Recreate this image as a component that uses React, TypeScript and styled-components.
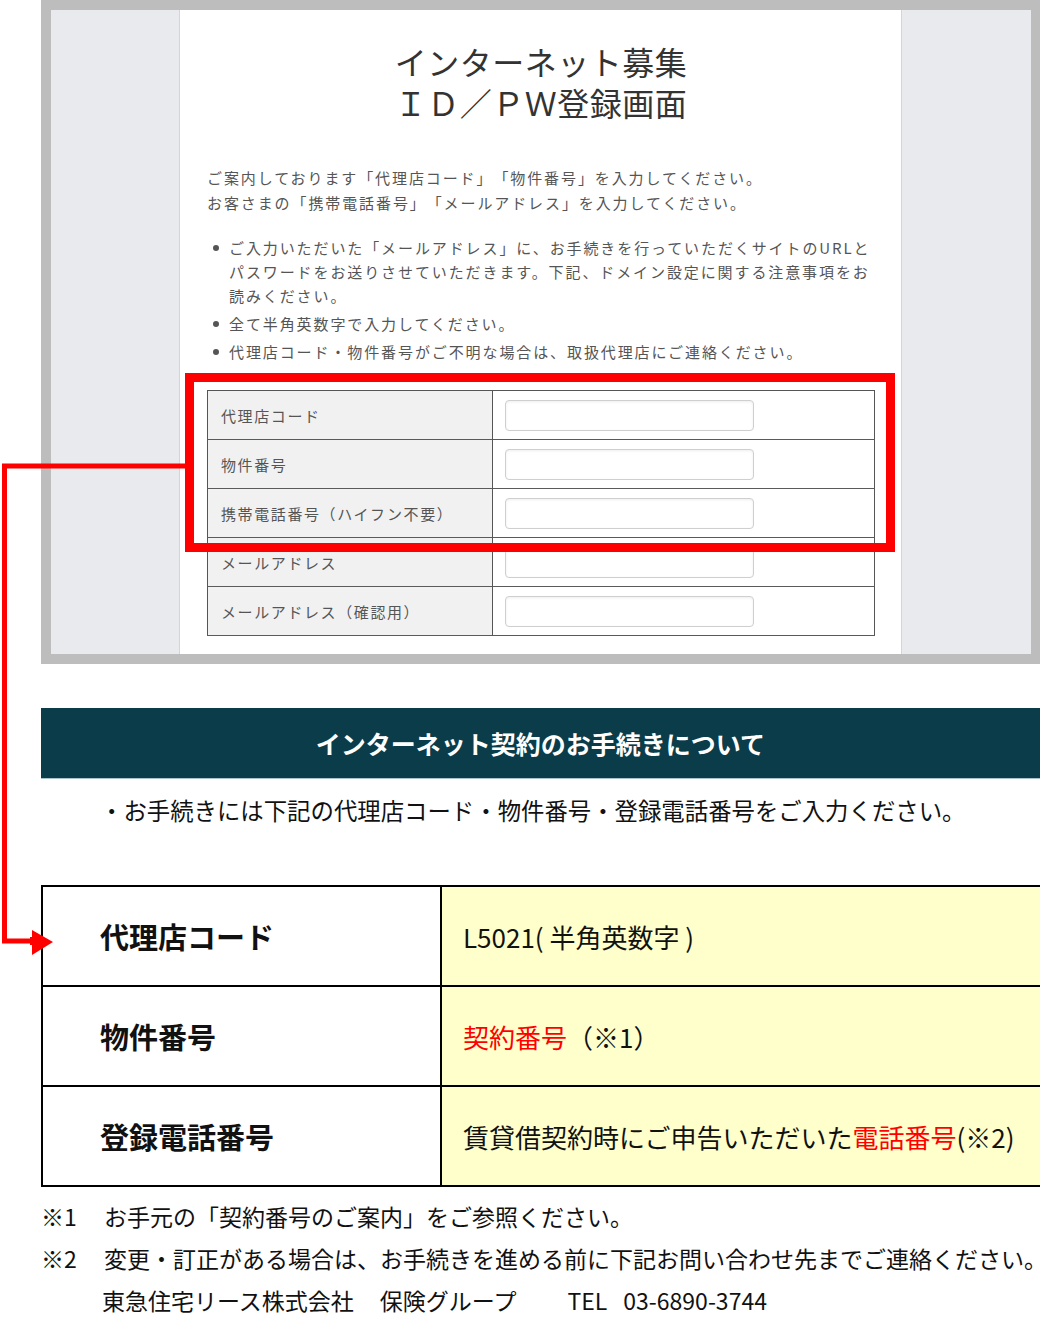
import React from 'react';
import styled, { createGlobalStyle } from 'styled-components';

const GlobalStyle = createGlobalStyle`
  html, body {
    margin: 0;
    padding: 0;
    background: #fff;
  }
  body {
    font-family: "Noto Sans CJK JP", "Noto Sans", sans-serif;
    color: #111;
    overflow-x: hidden;
  }
`;

const FORM_FIELDS: string[] = [
  '代理店コード',
  '物件番号',
  '携帯電話番号（ハイフン不要）',
  'メールアドレス',
  'メールアドレス（確認用）',
];

const NOTES: string[] = [
  'ご入力いただいた「メールアドレス」に、お手続きを行っていただくサイトのURLとパスワードをお送りさせていただきます。下記、ドメイン設定に関する注意事項をお読みください。',
  '全て半角英数字で入力してください。',
  '代理店コード・物件番号がご不明な場合は、取扱代理店にご連絡ください。',
];

const Page = styled.div`
  position: relative;
  width: 1040px;
  min-height: 1318px;
  padding-left: 41px;
  box-sizing: border-box;
  overflow: hidden;
`;

// --- screenshot of the registration screen ---
const ShotFrame = styled.div`
  display: grid;
  grid-template-columns: 128px 723px 129px;
  width: 999px;
  box-sizing: border-box;
  border: 10px solid #bdbdbd;
  border-right-width: 9px;
  background: #e9eaee;
`;

const SidePanel = styled.div`
  background: #e9eaee;
`;

const Sheet = styled.div`
  background: #fff;
  border-left: 1px solid #d4d5d9;
  border-right: 1px solid #d4d5d9;
  padding: 31px 26px 18px 27px;
  color: #555;
  font-size: 15px;
  letter-spacing: 1.9px;
  text-spacing-trim: space-all;
`;

const ShotTitle = styled.h1`
  margin: 0 0 42px;
  text-align: center;
  font-size: 32px;
  line-height: 41px;
  font-weight: 400;
  letter-spacing: 0.5px;
  color: #333;
`;

const Lead = styled.p`
  margin: 0 0 21px;
  line-height: 25px;
`;

const NoteList = styled.ul`
  list-style: none;
  margin: 0 0 26px;
  padding: 0 0 0 6px;
  display: flex;
  flex-direction: column;
  gap: 4px;
`;

const NoteItem = styled.li`
  display: flex;
  gap: 10px;
  line-height: 24px;

  &::before {
    content: '';
    flex: none;
    width: 6px;
    height: 6px;
    margin-top: 9px;
    border-radius: 50%;
    background: #555;
  }
`;

const FormTable = styled.table`
  width: 668px;
  border-collapse: collapse;
  border: 1px solid #555;
`;

const FormRow = styled.tr`
  height: 49px;
  border-bottom: 1px solid #5a5a5a;
`;

const FormLabel = styled.td`
  width: 258px;
  padding: 0 13px;
  background: #f1f1f1;
  border-right: 1px solid #555;
  font-size: 15px;
  letter-spacing: 1.6px;
  color: #555;
`;

const FormCell = styled.td`
  padding: 0 12px;
`;

const TextBox = styled.input`
  display: block;
  width: 249px;
  height: 31px;
  box-sizing: border-box;
  border: 1px solid #cfcfcf;
  border-radius: 4px;
  box-shadow: inset 0 1px 3px rgba(0, 0, 0, 0.07);
  background: #fff;
`;

// --- explanation section ---
const SectionBar = styled.h2`
  margin: 44px 0 0;
  width: 999px;
  height: 70px;
  display: flex;
  align-items: center;
  justify-content: center;
  background: #0b3c4a;
  border-bottom: 1px solid #a9c3cb;
  color: #fff;
  font-size: 25px;
  font-weight: 700;
`;

const Intro = styled.p`
  margin: 0;
  padding: 15px 0 0 59px;
  font-size: 23.4px;
  line-height: 32px;
  white-space: nowrap;
  color: #111;
`;

const InfoTable = styled.table`
  margin-top: 59px;
  width: 1001px;
  border-collapse: collapse;
  border: 2px solid #000;
`;

const InfoRow = styled.tr`
  height: 100px;
  border-bottom: 2px solid #000;
`;

const InfoLabel = styled.th`
  width: 340px;
  padding: 0 0 0 57px;
  text-align: left;
  background: #fff;
  border-right: 2px solid #000;
  font-size: 29px;
  font-weight: 700;
  color: #111;
`;

const InfoValue = styled.td`
  padding: 0 0 0 21px;
  background: #ffffcc;
  font-size: 26px;
  color: #111;
  white-space: nowrap;
`;

const Em = styled.span`
  color: #ff0000;
`;

const Footnotes = styled.div`
  padding-top: 8px;
  display: grid;
  grid-template-columns: 63px 1fr;
  font-size: 23px;
  line-height: 42px;
  color: #111;
  white-space: nowrap;
`;

const Mark = styled.span``;

const Contact = styled.div`
  grid-column: 2;
  display: flex;
  margin-left: -2px;
`;

const ContactPart = styled.span<{ $gap?: number }>`
  margin-left: ${p => p.$gap ?? 0}px;
`;

const Overlay = styled.svg`
  position: absolute;
  left: 0;
  top: 0;
  pointer-events: none;
`;

export default function App() {
  return (
    <Page>
      <GlobalStyle />
      <ShotFrame>
        <SidePanel />
        <Sheet>
          <ShotTitle>
            インターネット募集
            <br />
            ＩＤ／ＰＷ登録画面
          </ShotTitle>
          <Lead>
            ご案内しております「代理店コード」「物件番号」を入力してください。
            <br />
            お客さまの「携帯電話番号」「メールアドレス」を入力してください。
          </Lead>
          <NoteList>
            {NOTES.map(note => (
              <NoteItem key={note}>
                <span>{note}</span>
              </NoteItem>
            ))}
          </NoteList>
          <FormTable>
            <tbody>
              {FORM_FIELDS.map(field => (
                <FormRow key={field}>
                  <FormLabel>{field}</FormLabel>
                  <FormCell>
                    <TextBox type="text" aria-label={field} />
                  </FormCell>
                </FormRow>
              ))}
            </tbody>
          </FormTable>
        </Sheet>
        <SidePanel />
      </ShotFrame>

      <SectionBar>インターネット契約のお手続きについて</SectionBar>
      <Intro>・お手続きには下記の代理店コード・物件番号・登録電話番号をご入力ください。</Intro>

      <InfoTable>
        <tbody>
          <InfoRow>
            <InfoLabel>代理店コード</InfoLabel>
            <InfoValue>L5021( 半角英数字 )</InfoValue>
          </InfoRow>
          <InfoRow>
            <InfoLabel>物件番号</InfoLabel>
            <InfoValue>
              <Em>契約番号</Em>（※1）
            </InfoValue>
          </InfoRow>
          <InfoRow>
            <InfoLabel>登録電話番号</InfoLabel>
            <InfoValue>
              賃貸借契約時にご申告いただいた<Em>電話番号</Em>(※2)
            </InfoValue>
          </InfoRow>
        </tbody>
      </InfoTable>

      <Footnotes>
        <Mark>※1</Mark>
        <span>お手元の「契約番号のご案内」をご参照ください。</span>
        <Mark>※2</Mark>
        <span>変更・訂正がある場合は、お手続きを進める前に下記お問い合わせ先までご連絡ください。</span>
        <Contact>
          <ContactPart>東急住宅リース株式会社</ContactPart>
          <ContactPart $gap={26}>保険グループ</ContactPart>
          <ContactPart $gap={51}>TEL</ContactPart>
          <ContactPart $gap={16}>03-6890-3744</ContactPart>
        </Contact>
      </Footnotes>

      <Overlay width="1040" height="1318" viewBox="0 0 1040 1318">
        <rect x="189.5" y="377.5" width="701" height="170" fill="none" stroke="#ff0000" strokeWidth="9" />
        <polyline
          points="185,466 4.5,466 4.5,941 36,941"
          fill="none"
          stroke="#ff0000"
          strokeWidth="5"
          strokeLinejoin="miter"
        />
        <rect x="30" y="937" width="6" height="8" fill="#ff0000" />
        <polygon points="32,930 53,942 32,955" fill="#ff0000" />
      </Overlay>
    </Page>
  );
}
